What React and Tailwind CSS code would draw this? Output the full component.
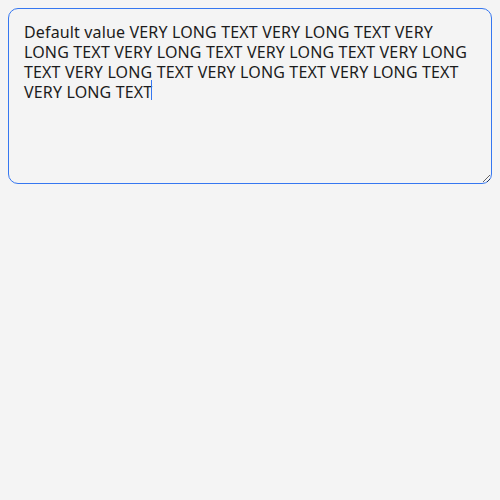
import React, { useEffect, useRef, useState } from 'react'

const text = "Default value VERY LONG TEXT VERY LONG TEXT VERY LONG TEXT VERY LONG TEXT VERY LONG TEXT VERY LONG TEXT VERY LONG TEXT VERY LONG TEXT VERY LONG TEXT VERY LONG TEXT"

export default function App() {
    const ref = useRef(null)
    const markRef = useRef(null)
    const [caret, setCaret] = useState(null)

    useEffect(() => {
        const el = ref.current
        if (el) {
            el.focus()
            el.setSelectionRange(el.value.length, el.value.length)
        }
        // the headless shot drops the native caret, so place one by hand
        const m = markRef.current
        if (m) setCaret({ left: m.offsetLeft, top: m.offsetTop })
    }, [])

    return (
        <div className="min-h-screen w-full bg-[#f4f4f4] p-2" style={{ fontFamily: '"Noto Sans", sans-serif' }}>
            <div className="relative w-[484px]">
                <textarea
                    ref={ref}
                    autoFocus
                    defaultValue={text}
                    className="block w-[484px] h-[176px] rounded-[10px] border border-[#3677f0] bg-[#f4f4f4] pt-[13px] pl-[15px] pr-[19px] text-[16px] leading-[20px] tracking-[0.15px] text-[#1c1c1c] outline-none caret-[#3677f0]"
                />
                <div
                    aria-hidden="true"
                    className="pointer-events-none invisible absolute inset-0 border border-transparent pt-[13px] pl-[15px] pr-[19px] text-[16px] leading-[20px] tracking-[0.15px] whitespace-pre-wrap break-words"
                >
                    {text}<span ref={markRef}>&#8203;</span>
                </div>
                {caret && (
                    <div
                        className="pointer-events-none absolute w-px h-[20px] bg-[#3677f0]"
                        style={{ left: caret.left, top: caret.top }}
                    />
                )}
            </div>
        </div>
    )
}
